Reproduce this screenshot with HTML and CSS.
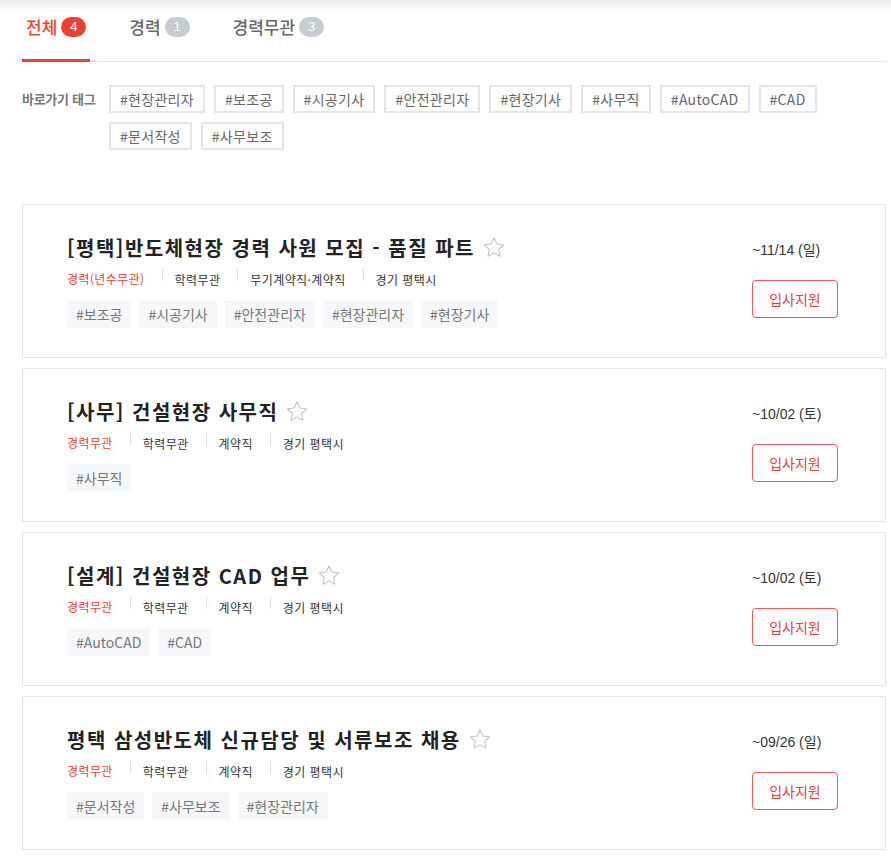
FILE: index.html
```html
<!DOCTYPE html>
<html lang="ko">
<head>
    <meta charset="UTF-8">
    <meta name="viewport" content="width=device-width, initial-scale=1.0">
    <title>채용공고</title>
    <link rel="stylesheet" href="styles.css">
</head>
<body>
    <div class="wrap">
        <ul class="tabs">
            <li class="tab active">전체<span class="count">4</span></li>
            <li class="tab">경력<span class="count">1</span></li>
            <li class="tab">경력무관<span class="count">3</span></li>
        </ul>

        <div class="quick-tags">
            <span class="quick-label">바로가기 태그</span>
            <div class="tag-list">
                <a class="tag-box">#현장관리자</a>
                <a class="tag-box">#보조공</a>
                <a class="tag-box">#시공기사</a>
                <a class="tag-box">#안전관리자</a>
                <a class="tag-box">#현장기사</a>
                <a class="tag-box">#사무직</a>
                <a class="tag-box">#AutoCAD</a>
                <a class="tag-box">#CAD</a>
                <a class="tag-box">#문서작성</a>
                <a class="tag-box">#사무보조</a>
            </div>
        </div>

        <div class="job-list">
            <div class="job-card">
                <div class="job-info">
                    <h2 class="job-title">[평택]반도체현장 경력 사원 모집 - 품질 파트
                        <svg class="star" viewBox="0 0 24 24"><path d="M12 2.6l2.7 5.7 6.2.8-4.6 4.3 1.2 6.2-5.5-3.1-5.5 3.1 1.2-6.2-4.6-4.3 6.2-.8z"/></svg>
                    </h2>
                    <div class="meta">
                        <span class="career">경력(년수무관)</span>
                        <span>학력무관</span>
                        <span>무기계약직·계약직</span>
                        <span>경기 평택시</span>
                    </div>
                    <div class="job-tags">
                        <span class="job-tag">#보조공</span>
                        <span class="job-tag">#시공기사</span>
                        <span class="job-tag">#안전관리자</span>
                        <span class="job-tag">#현장관리자</span>
                        <span class="job-tag">#현장기사</span>
                    </div>
                </div>
                <div class="job-side">
                    <div class="deadline">~11/14 (일)</div>
                    <button class="apply">입사지원</button>
                </div>
            </div>

            <div class="job-card">
                <div class="job-info">
                    <h2 class="job-title">[사무] 건설현장 사무직
                        <svg class="star" viewBox="0 0 24 24"><path d="M12 2.6l2.7 5.7 6.2.8-4.6 4.3 1.2 6.2-5.5-3.1-5.5 3.1 1.2-6.2-4.6-4.3 6.2-.8z"/></svg>
                    </h2>
                    <div class="meta">
                        <span class="career">경력무관</span>
                        <span>학력무관</span>
                        <span>계약직</span>
                        <span>경기 평택시</span>
                    </div>
                    <div class="job-tags">
                        <span class="job-tag">#사무직</span>
                    </div>
                </div>
                <div class="job-side">
                    <div class="deadline">~10/02 (토)</div>
                    <button class="apply">입사지원</button>
                </div>
            </div>

            <div class="job-card">
                <div class="job-info">
                    <h2 class="job-title">[설계] 건설현장 CAD 업무
                        <svg class="star" viewBox="0 0 24 24"><path d="M12 2.6l2.7 5.7 6.2.8-4.6 4.3 1.2 6.2-5.5-3.1-5.5 3.1 1.2-6.2-4.6-4.3 6.2-.8z"/></svg>
                    </h2>
                    <div class="meta">
                        <span class="career">경력무관</span>
                        <span>학력무관</span>
                        <span>계약직</span>
                        <span>경기 평택시</span>
                    </div>
                    <div class="job-tags">
                        <span class="job-tag">#AutoCAD</span>
                        <span class="job-tag">#CAD</span>
                    </div>
                </div>
                <div class="job-side">
                    <div class="deadline">~10/02 (토)</div>
                    <button class="apply">입사지원</button>
                </div>
            </div>

            <div class="job-card">
                <div class="job-info">
                    <h2 class="job-title">평택 삼성반도체 신규담당 및 서류보조 채용
                        <svg class="star" viewBox="0 0 24 24"><path d="M12 2.6l2.7 5.7 6.2.8-4.6 4.3 1.2 6.2-5.5-3.1-5.5 3.1 1.2-6.2-4.6-4.3 6.2-.8z"/></svg>
                    </h2>
                    <div class="meta">
                        <span class="career">경력무관</span>
                        <span>학력무관</span>
                        <span>계약직</span>
                        <span>경기 평택시</span>
                    </div>
                    <div class="job-tags">
                        <span class="job-tag">#문서작성</span>
                        <span class="job-tag">#사무보조</span>
                        <span class="job-tag">#현장관리자</span>
                    </div>
                </div>
                <div class="job-side">
                    <div class="deadline">~09/26 (일)</div>
                    <button class="apply">입사지원</button>
                </div>
            </div>
        </div>
    </div>
</body>
</html>
```

FILE: styles.css
```css
body {
    margin: 0;
    font-family: 'Noto Sans CJK KR', 'Noto Sans', sans-serif;
    color: #333;
    background: linear-gradient(#ededed, #fff 12px) no-repeat;
    background-color: #fff;
}

.wrap {
    padding: 0 5px 0 22px;
}

/* tabs */
.tabs {
    display: flex;
    gap: 35px;
    margin: 0;
    padding: 0;
    list-style: none;
    border-bottom: 1px solid #e4e4e8;
}

.tab {
    display: flex;
    align-items: center;
    padding: 15px 4px 20px;
    margin-bottom: -1px;
    font-size: 17px;
    font-weight: 500;
    line-height: 24px;
    color: #666;
    border-bottom: 3px solid transparent;
}

.tab.active {
    color: #e8432e;
    border-bottom-color: #e8432e;
}

.count {
    display: inline-block;
    min-width: 25px;
    height: 20px;
    margin-left: 4px;
    border-radius: 10px;
    background-color: #c9cbd3;
    color: #fff;
    font-family: 'Liberation Sans', sans-serif;
    font-size: 13px;
    line-height: 20px;
    text-align: center;
}

.tab.active .count {
    background-color: #e8432e;
}

/* quick tags */
.quick-tags {
    display: flex;
    align-items: flex-start;
    margin-top: 23px;
}

.quick-label {
    width: 87px;
    flex-shrink: 0;
    padding-top: 4px;
    font-size: 13px;
    font-weight: 700;
    letter-spacing: -0.3px;
    color: #777;
}

.tag-list {
    display: flex;
    flex-wrap: wrap;
    gap: 9px 9px;
}

.tag-box {
    height: 28px;
    box-sizing: border-box;
    padding: 0 9px;
    border: 2px solid #e4e5eb;
    font-size: 14px;
    line-height: 24px;
    letter-spacing: 0.3px;
    color: #666;
}

/* job cards */
.job-list {
    display: flex;
    flex-direction: column;
    gap: 10px;
    margin-top: 54px;
}

.job-card {
    display: flex;
    justify-content: space-between;
    align-items: flex-start;
    height: 154px;
    box-sizing: border-box;
    padding: 30px 47px 0 44px;
    border: 1px solid #e4e4ea;
}

.job-title {
    display: flex;
    align-items: center;
    margin: 0;
    font-size: 20px;
    font-weight: 700;
    line-height: 24px;
    letter-spacing: 1.5px;
    color: #222;
}

.star {
    width: 26px;
    height: 26px;
    margin-left: 6px;
    fill: none;
    stroke: #c4c4c4;
    stroke-width: 1;
    stroke-linejoin: round;
}

.meta {
    display: flex;
    align-items: center;
    margin-top: 8px;
    font-size: 12px;
    line-height: 18px;
    letter-spacing: 0.4px;
    color: #333;
}

.meta span + span::before {
    content: "";
    display: inline-block;
    width: 1px;
    height: 12px;
    margin: 0 12px 0 17px;
    background-color: #dcdcdc;
    vertical-align: 4px;
}

.meta .career {
    color: #f0412f;
}

.job-tags {
    display: flex;
    gap: 8px;
    margin-top: 11px;
}

.job-tag {
    height: 28px;
    padding: 0 9px;
    background-color: #f5f7fb;
    font-size: 14px;
    line-height: 28px;
    color: #777;
}

.job-side {
    display: flex;
    flex-direction: column;
    width: 86px;
    padding-top: 6px;
}

.deadline {
    font-family: 'Liberation Sans', 'Noto Sans CJK KR', sans-serif;
    font-size: 14px;
    line-height: 18px;
    white-space: nowrap;
    color: #333;
}

.apply {
    height: 38px;
    margin-top: 21px;
    border: 1px solid #f25757;
    border-radius: 4px;
    background-color: #fff;
    color: #e83c3c;
    font-family: 'Noto Sans CJK KR', sans-serif;
    font-size: 14px;
    cursor: pointer;
}
```
